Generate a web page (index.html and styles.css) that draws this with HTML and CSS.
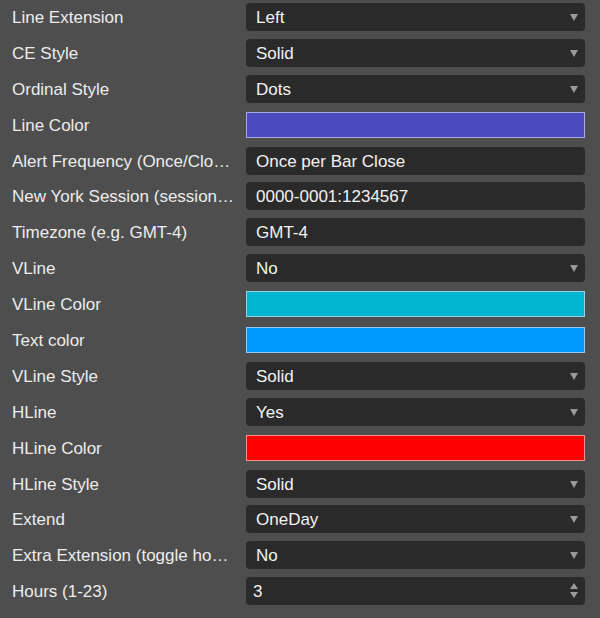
FILE: index.html
```html
<!DOCTYPE html>
<html lang="en">
<head>
    <meta charset="UTF-8">
    <title>Indicator Inputs</title>
    <link rel="stylesheet" href="styles.css">
</head>
<body>
    <div class="settings">
        <div class="row">
            <div class="label">Line Extension</div>
            <div class="control select">Left<span class="arrow"></span></div>
        </div>
        <div class="row">
            <div class="label">CE Style</div>
            <div class="control select">Solid<span class="arrow"></span></div>
        </div>
        <div class="row">
            <div class="label">Ordinal Style</div>
            <div class="control select">Dots<span class="arrow"></span></div>
        </div>
        <div class="row">
            <div class="label">Line Color</div>
            <div class="swatch indigo"></div>
        </div>
        <div class="row">
            <div class="label">Alert Frequency (Once/Close/All)</div>
            <div class="control">Once per Bar Close</div>
        </div>
        <div class="row">
            <div class="label">New York Session (session time)</div>
            <div class="control">0000-0001:1234567</div>
        </div>
        <div class="row">
            <div class="label">Timezone (e.g. GMT-4)</div>
            <div class="control">GMT-4</div>
        </div>
        <div class="row">
            <div class="label">VLine</div>
            <div class="control select">No<span class="arrow"></span></div>
        </div>
        <div class="row">
            <div class="label">VLine Color</div>
            <div class="swatch cyan"></div>
        </div>
        <div class="row">
            <div class="label">Text color</div>
            <div class="swatch blue"></div>
        </div>
        <div class="row">
            <div class="label">VLine Style</div>
            <div class="control select">Solid<span class="arrow"></span></div>
        </div>
        <div class="row">
            <div class="label">HLine</div>
            <div class="control select">Yes<span class="arrow"></span></div>
        </div>
        <div class="row">
            <div class="label">HLine Color</div>
            <div class="swatch red"></div>
        </div>
        <div class="row">
            <div class="label">HLine Style</div>
            <div class="control select">Solid<span class="arrow"></span></div>
        </div>
        <div class="row">
            <div class="label">Extend</div>
            <div class="control select">OneDay<span class="arrow"></span></div>
        </div>
        <div class="row">
            <div class="label">Extra Extension (toggle hours)</div>
            <div class="control select">No<span class="arrow"></span></div>
        </div>
        <div class="row">
            <div class="label">Hours (1-23)</div>
            <div class="control number">3<span class="spin"><span class="up"></span><span class="down"></span></span></div>
        </div>
    </div>
</body>
</html>
```

FILE: styles.css
```css
/* General Reset */
* {
    margin: 0;
    padding: 0;
    box-sizing: border-box;
}

body {
    font-family: "Liberation Sans", Arial, sans-serif;
    font-size: 17px;
    background-color: #4e4e4e;
    color: #ececec;
    width: 600px;
    height: 618px;
    overflow: hidden;
}

.settings {
    display: flex;
    flex-direction: column;
    gap: 7.9px;
    padding: 3px 15px 0 12px;
}

.row {
    display: flex;
    align-items: center;
    height: 28px;
}

.label {
    width: 223px;
    margin-right: 11px;
    padding-top: 2px;
    white-space: nowrap;
    overflow: hidden;
    text-overflow: ellipsis;
}

.control {
    position: relative;
    flex: 1;
    height: 28px;
    line-height: 29px;
    padding-left: 10px;
    background-color: #2a2a2a;
    border-radius: 4px;
    color: #f2f2f2;
}

.control.number {
    padding-left: 7px;
}

/* dropdown arrow */
.arrow {
    position: absolute;
    right: 7px;
    top: 11px;
    border-left: 4px solid transparent;
    border-right: 4px solid transparent;
    border-top: 7px solid #9a9a9a;
}

.spin {
    position: absolute;
    right: 7px;
    top: 6px;
    display: flex;
    flex-direction: column;
    gap: 3px;
}

.spin .up {
    border-left: 4px solid transparent;
    border-right: 4px solid transparent;
    border-bottom: 6px solid #9a9a9a;
}

.spin .down {
    border-left: 4px solid transparent;
    border-right: 4px solid transparent;
    border-top: 6px solid #9a9a9a;
}

.swatch {
    flex: 1;
    height: 26px;
    border: 1px solid;
}

.swatch.indigo {
    background-color: #4b4bbf;
    border-color: #a7a7e6;
}

.swatch.cyan {
    background-color: #00b7cf;
    border-color: #8fd6e2;
}

.swatch.blue {
    background-color: #0099ff;
    border-color: #8cc9f2;
}

.swatch.red {
    background-color: #ff0000;
    border-color: #ff8c8c;
}
```
